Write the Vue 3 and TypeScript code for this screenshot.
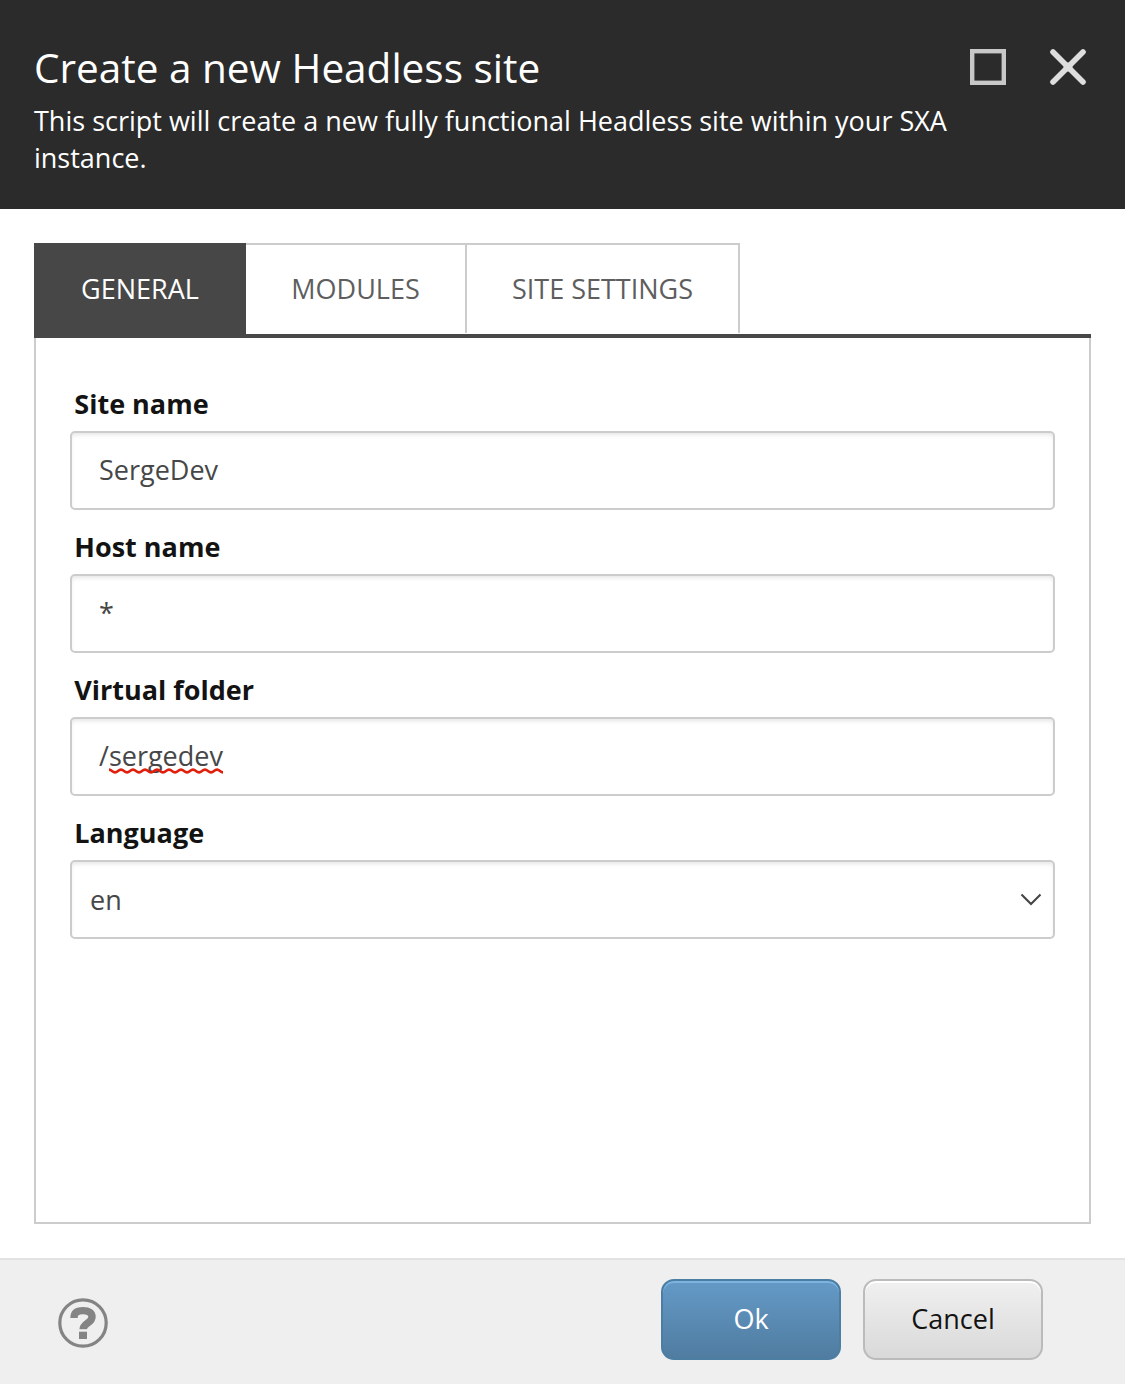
<script setup lang="ts">
import { ref } from 'vue'

interface Field {
  id: string
  label: string
  value: string
  misspelled?: boolean
}

const tabs: string[] = ['General', 'Modules', 'Site settings']
const activeTab = ref(0)

const fields = ref<Field[]>([
  { id: 'site', label: 'Site name', value: 'SergeDev' },
  { id: 'host', label: 'Host name', value: '*' },
  { id: 'folder', label: 'Virtual folder', value: '/sergedev', misspelled: true },
])
const language = ref('en')

// Zigzag used under a misspelled word, one wave per 12px.
const wave = 'M-3 3' + Array.from({ length: 10 }, () => 'q3 -2.8 6 0t6 0').join('')
</script>

<template>
  <div class="dialog">
    <header class="header">
      <div class="heading">
        <h1 class="title">Create a new Headless site</h1>
        <p class="subtitle">This script will create a new fully functional Headless site within your SXA instance.</p>
      </div>
      <div class="window-actions">
        <button class="icon-button" type="button" aria-label="Maximize">
          <svg width="36" height="36" viewBox="0 0 36 36">
            <rect x="2.2" y="2.2" width="31.6" height="31.6" fill="none" stroke="#c8c8c8" stroke-width="4.4" />
          </svg>
        </button>
        <button class="icon-button" type="button" aria-label="Close">
          <svg width="36" height="36" viewBox="0 0 36 36">
            <path d="M3 3 33 33M33 3 3 33" fill="none" stroke="#dedede" stroke-width="5.6" stroke-linecap="round" />
            <circle cx="18" cy="18" r="4.5" fill="#dedede" />
          </svg>
        </button>
      </div>
    </header>

    <main class="content">
      <nav class="tabs">
        <button
          v-for="(tab, i) in tabs"
          :key="tab"
          type="button"
          class="tab"
          :class="['tab-' + i, { active: i === activeTab }]"
          @click="activeTab = i"
        >{{ tab }}</button>
      </nav>
      <section class="panel">
        <div v-for="field in fields" :key="field.id" class="field">
          <label class="label" :for="field.id">{{ field.label }}</label>
          <div class="control">
            <input :id="field.id" v-model="field.value" class="box" type="text" spellcheck="false" />
            <svg v-if="field.misspelled" class="squiggle" width="114" height="6" viewBox="0 0 114 6">
              <path :d="wave" fill="none" stroke="#e0200c" stroke-width="2.5" />
            </svg>
          </div>
        </div>
        <div class="field">
          <label class="label" for="language">Language</label>
          <div class="control">
            <select id="language" v-model="language" class="box select">
              <option value="en">en</option>
            </select>
            <svg class="chevron" width="22" height="13" viewBox="0 0 22 13">
              <path d="M1.5 1.5 11 11 20.5 1.5" fill="none" stroke="#454545" stroke-width="2.1" />
            </svg>
          </div>
        </div>
      </section>
    </main>

    <footer class="footer">
      <button class="icon-button" type="button" aria-label="Help">
        <svg width="50" height="50" viewBox="0 0 50 50">
          <circle cx="25" cy="25" r="23.2" fill="none" stroke="#848484" stroke-width="3.2" />
          <path d="M16 20C16 14.5 19 12.6 25 12.6C31 12.6 34 15 34 19C34 25.500 25 24.500 25 32" fill="none" stroke="#848484" stroke-width="7.4" />
          <path d="M20 32.2h10" stroke="#efefef" stroke-width="2" />
          <rect x="21" y="33.7" width="8" height="7.3" fill="#848484" />
        </svg>
      </button>
      <div class="buttons">
        <button class="button primary" type="button">Ok</button>
        <button class="button" type="button">Cancel</button>
      </div>
    </footer>
  </div>
</template>

<style>
body {
  margin: 0;
  background: #fff;
}
</style>

<style scoped>
.dialog,
.dialog * {
  box-sizing: border-box;
}
.dialog {
  display: flex;
  flex-direction: column;
  height: 1384px;
  font-family: 'Open Sans', 'Noto Sans', sans-serif;
  font-size: 27px;
  color: #474747;
}
button,
input,
select {
  font: inherit;
  margin: 0;
  outline: none;
}
.header {
  display: flex;
  justify-content: space-between;
  height: 209px;
  padding: 39px 39px 0 34px;
  background: #2b2b2b;
  color: #fff;
}
.heading {
  width: 930px;
}
.title {
  margin: 0;
  font-size: 40.5px;
  line-height: 57px;
  font-weight: 400;
}
.subtitle {
  margin: 6px 0 0;
  line-height: 37px;
}
.window-actions {
  display: flex;
  gap: 44px;
  padding-top: 10px;
}
.icon-button {
  display: block;
  height: max-content;
  padding: 0;
  border: 0;
  background: none;
}
.icon-button svg {
  display: block;
}
.content {
  flex: 1;
  display: flex;
  flex-direction: column;
  padding: 34px;
}
.tabs {
  display: flex;
  height: 95px;
  border-bottom: 4px solid #474747;
}
.tab {
  height: 90px;
  padding: 0 0 1px;
  border: solid #ccc;
  border-width: 2px 2px 0 0;
  background: #fff;
  color: #5e5e5e;
  text-transform: uppercase;
}
.tab-0 { width: 212px; }
.tab-1 { width: 221px; }
.tab-2 { width: 273px; }
.tab.active {
  height: 91px;
  padding: 0 0 2px;
  border-width: 2px 0 0;
  border-color: #474747;
  background: #474747;
  color: #fff;
}
.panel {
  flex: 1;
  padding: 45px 34px 0;
  border: 2px solid #ccc;
  border-top: 0;
}
.field {
  height: 143px;
}
.label {
  display: block;
  height: 48px;
  padding-left: 4.3px;
  line-height: 41px;
  font-weight: 700;
  color: #131313;
}
.control {
  position: relative;
}
.box {
  display: block;
  width: 100%;
  height: 79px;
  padding: 0 27px 2px;
  border: 2px solid #ccc;
  border-radius: 5px;
  background: #fff;
  box-shadow: inset 0 3px 4px -1px rgba(0, 0, 0, 0.1);
  color: #474747;
}
.select {
  appearance: none;
  padding: 0 18px;
}
.squiggle {
  position: absolute;
  left: 39px;
  top: 51px;
}
.chevron {
  position: absolute;
  right: 13px;
  top: 33px;
  pointer-events: none;
}
.footer {
  display: flex;
  justify-content: space-between;
  height: 126px;
  padding: 19px 82px 0 58px;
  border-top: 2px solid #e2e2e2;
  background: #efefef;
}
.footer .icon-button {
  margin-top: 19px;
}
.buttons {
  display: flex;
  gap: 22px;
}
.button {
  width: 180px;
  height: 81px;
  padding: 0 0 2px;
  border: 2px solid #bbb;
  border-radius: 13px;
  background: linear-gradient(#f0f0f0, #d9d9d9);
  box-shadow: inset 0 2px #fff;
  color: #131313;
}
.primary {
  border-color: #4c7da3;
  background: linear-gradient(#659bc8, #4f7b9f) border-box;
  box-shadow: inset 0 2px #7db4df;
  color: #fff;
}
</style>
